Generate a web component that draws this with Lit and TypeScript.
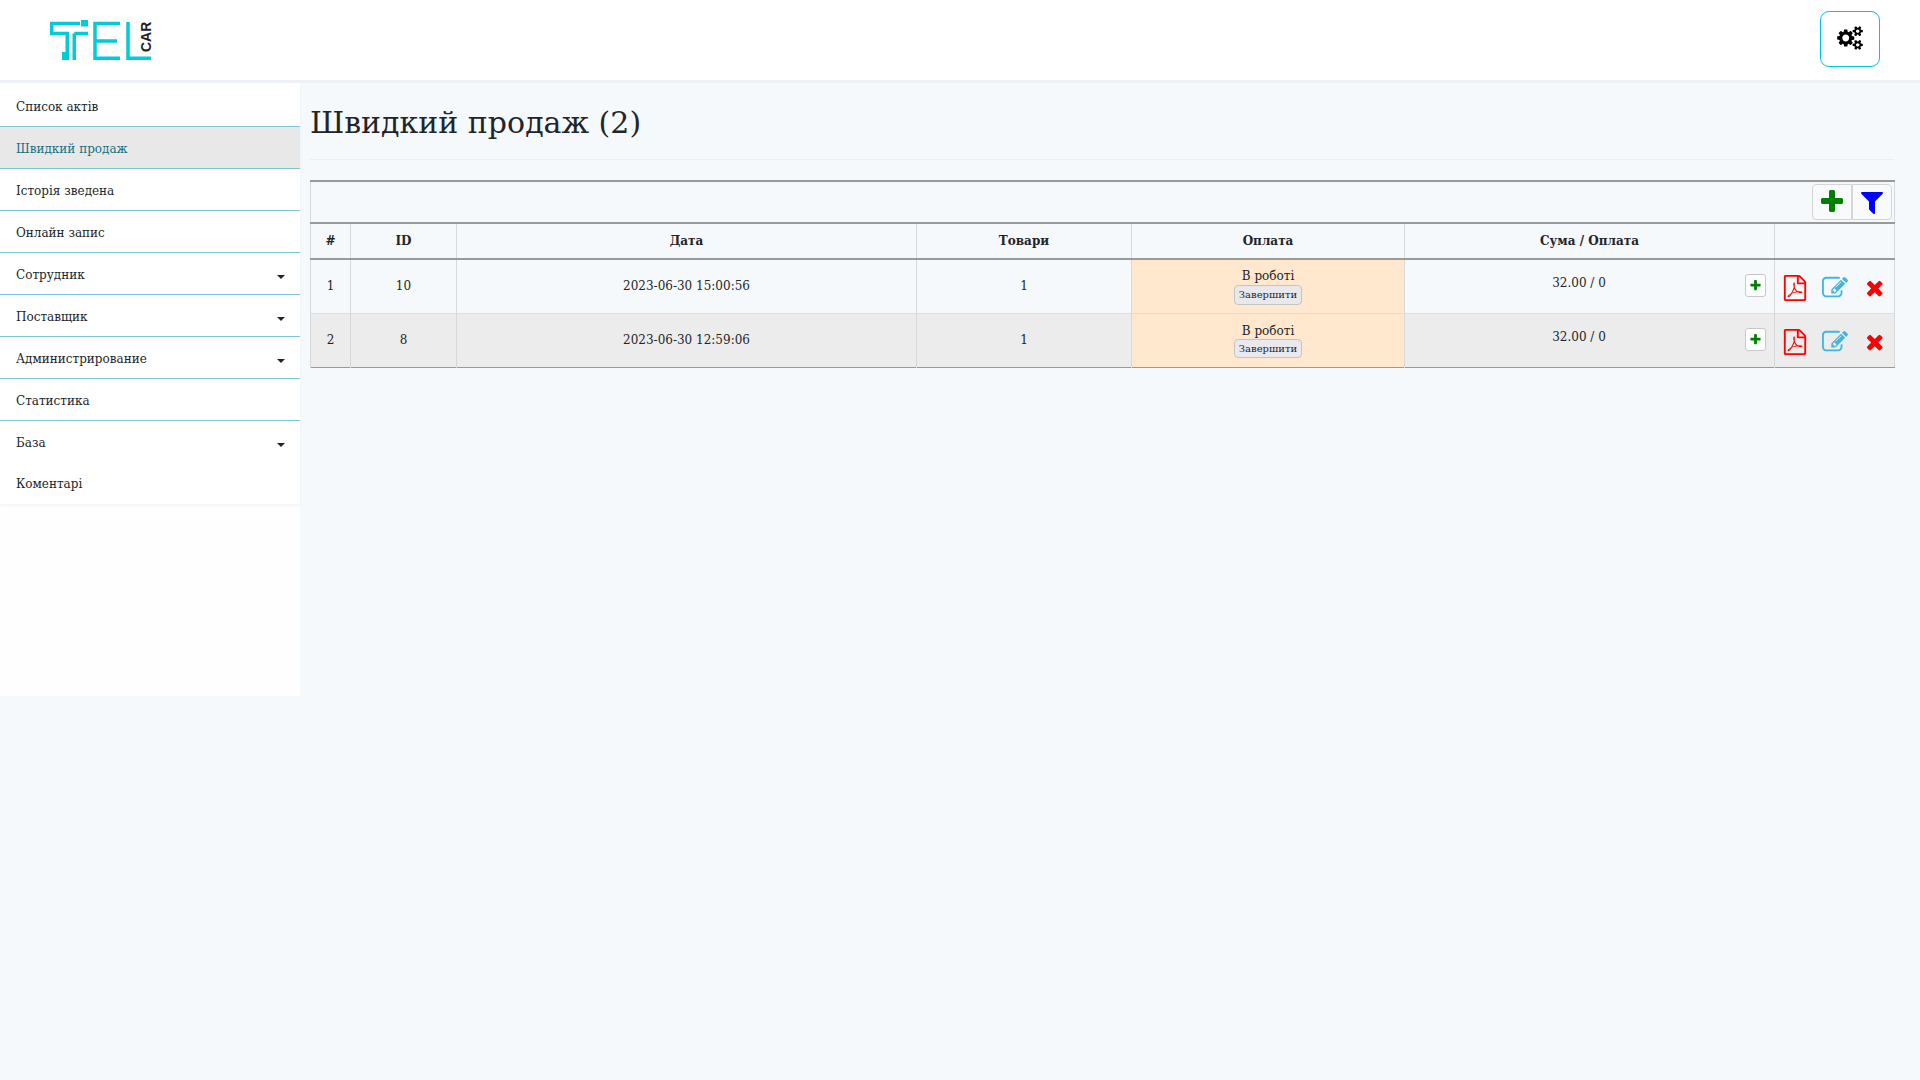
import { LitElement, html, css, svg } from "lit";
import { customElement } from "lit/decorators.js";

const P = {
  plus: "M1600 736v192q0 40-28 68t-68 28h-416v416q0 40-28 68t-68 28h-192q-40 0-68-28t-28-68v-416h-416q-40 0-68-28t-28-68v-192q0-40 28-68t68-28h416v-416q0-40 28-68t68-28h192q40 0 68 28t28 68v416h416q40 0 68 28t28 68z",
  times: "M1490 1322q0 40-28 68l-136 136q-28 28-68 28t-68-28l-294-294-294 294q-28 28-68 28t-68-28l-136-136q-28-28-28-68t28-68l294-294-294-294q-28-28-28-68t28-68l136-136q28-28 68-28t68 28l294 294 294-294q28-28 68-28t68 28l136 136q28 28 28 68t-28 68l-294 294 294 294q28 28 28 68z",
  filter: "M1595 295q17 41-14 70l-493 493v742q0 42-39 59-13 5-25 5-27 0-45-19l-256-256q-19-19-19-45v-486l-493-493q-31-29-14-70 17-39 59-39h1280q42 0 59 39z",
  edit: "M888 1184l116-116-152-152-116 116v56h96v96h56zm440-720q-16-16-33 1l-350 350q-17 17-1 33t33-1l350-350q17-17 1-33zm80 594v190q0 119-84.5 203.5t-203.5 84.5h-832q-119 0-203.5-84.5t-84.5-203.5v-832q0-119 84.5-203.5t203.5-84.5h832q63 0 117 25 15 7 18 23 3 17-9 29l-49 49q-14 14-32 8-23-6-45-6h-832q-66 0-113 47t-47 113v832q0 66 47 113t113 47h832q66 0 113-47t47-113v-126q0-13 9-22l64-64q15-15 35-7t20 29zm-96-738l288 288-672 672h-288v-288zm444 132l-92 92-288-288 92-92q28-28 68-28t68 28l152 152q28 28 28 68t-28 68z",
  pdf: "M1596 380q28 28 48 76t20 88v1152q0 40-28 68t-68 28h-1344q-40 0-68-28t-28-68v-1600q0-40 28-68t68-28h896q40 0 88 20t76 48zm-444-244v376h376q-10-29-22-41l-313-313q-12-12-41-22zm384 1528v-1024h-416q-40 0-68-28t-28-68v-416h-768v1536h1280zm-514-593q33 26 84 56 59-7 117-7 147 0 177 49 16 22 2 52 0 1-1 2l-2 2v1q-6 38-71 38-48 0-115-20t-130-53q-221 24-392 83-153 262-242 262-15 0-28-7l-24-12q-1-1-6-5-10-10-6-36 9-40 56-91.5t132-96.5q14-9 23 6 2 2 2 4 52-85 107-197 68-136 104-262-24-82-30.5-159.5t6.5-127.5q11-40 42-40h22q23 0 35 15 18 21 9 68-2 6-4 8 1 3 1 8v30q-2 123-14 192 55 164 146 238zm-576 411q52-24 137-158-51 40-87.5 84t-49.5 74zm398-920q-15 42-2 132 1-7 7-44 0-3 7-43 1-4 4-8-1-1-1-2-1-2-1-3-1-22-13-36 0 1-1 2v2zm-124 661q135-54 284-81-2-1-13-9.5t-16-13.5q-76-67-127-176-27 86-83 197-30 56-45 83zm646-16q-24-24-140-24 76 28 124 28 14 0 18-1 0-1-2-3z",
  cogs: "M896 896q0-106-75-181t-181-75-181 75-75 181 75 181 181 75 181-75 75-181zm768 512q0-52-38-90t-90-38-90 38-38 90q0 53 37.5 90.5t90.5 37.5 90.5-37.5 37.5-90.5zm0-1024q0-52-38-90t-90-38-90 38-38 90q0 53 37.5 90.5t90.5 37.5 90.5-37.5 37.5-90.5zm-384 421v185q0 10-7 19.5t-16 10.5l-155 24q-11 35-32 76 34 48 90 115 7 11 7 20 0 12-7 19-23 30-82.5 89.5t-78.5 59.5q-11 0-21-7l-115-90q-37 19-77 31-11 108-23 155-7 24-30 24h-186q-11 0-20-7.5t-10-17.5l-23-153q-34-10-75-31l-118 89q-7 7-20 7-11 0-21-8-144-133-144-160 0-9 7-19 10-14 41-53t47-61q-23-44-35-82l-152-24q-10-1-17-9.5t-7-19.5v-185q0-10 7-19.5t16-10.5l155-24q11-35 32-76-34-48-90-115-7-11-7-20 0-12 7-20 22-30 82-89t79-59q11 0 21 7l115 90q34-18 77-32 11-108 23-154 7-24 30-24h186q11 0 20 7.5t10 17.5l23 153q34 10 75 31l118-89q8-7 20-7 11 0 21 8 144 133 144 160 0 8-7 19-12 16-42 54t-45 60q23 48 34 82l152 23q10 2 17 10.5t7 19.5zm640 533v140q0 16-149 31-12 27-30 52 51 113 51 138 0 4-4 7-122 71-124 71-8 0-46-47t-52-68q-20 2-30 2t-30-2q-14 21-52 68t-46 47q-2 0-124-71-4-3-4-7 0-25 51-138-18-25-30-52-149-15-149-31v-140q0-16 149-31 13-29 30-52-51-113-51-138 0-4 4-7 4-2 35-20t59-34 30-16q8 0 46 46.5t52 67.5q20-2 30-2t30 2q51-71 92-112l6-2q4 0 124 70 4 3 4 7 0 25-51 138 17 23 30 52 149 15 149 31zm0-1024v140q0 16-149 31-12 27-30 52 51 113 51 138 0 4-4 7-122 71-124 71-8 0-46-47t-52-68q-20 2-30 2t-30-2q-14 21-52 68t-46 47q-2 0-124-71-4-3-4-7 0-25 51-138-18-25-30-52-149-15-149-31v-140q0-16 149-31 13-29 30-52-51-113-51-138 0-4 4-7 4-2 35-20t59-34 30-16q8 0 46 46.5t52 67.5q20-2 30-2t30 2q51-71 92-112l6-2q4 0 124 70 4 3 4 7 0 25-51 138 17 23 30 52 149 15 149 31z",
};

function icon(d: string, cls: string, vw = 1792) {
  return html`<svg class="ic ${cls}" viewBox="0 0 ${vw} 1792" fill="currentColor"><path d=${d}></path></svg>`;
}

const NAV: [string, boolean, boolean?][] = [
  ["Список актів", false],
  ["Швидкий продаж", false, true],
  ["Історія зведена", false],
  ["Онлайн запис", false],
  ["Сотрудник", true],
  ["Поставщик", true],
  ["Администрирование", true],
  ["Статистика", false],
  ["База", true],
  ["Коментарі", false],
];

const ROWS = [
  { n: 1, id: 10, date: "2023-06-30 15:00:56" },
  { n: 2, id: 8, date: "2023-06-30 12:59:06" },
];

@customElement("app-root")
export class AppRoot extends LitElement {
  static styles = css`
    :host {
      display: block;
      min-height: 1080px;
      background: #f6f9fc;
      font-family: "DejaVu Serif", serif;
      font-size: 12px;
      color: #212529;
    }
    * { box-sizing: border-box; }
    .ic { display: block; }
    .top {
      height: 83px;
      background: #fff;
      border-bottom: 3px solid #edf0f4;
      display: flex;
      align-items: flex-start;
      justify-content: space-between;
      padding: 11px 40px 0 50px;
    }
    .logo { display: flex; align-items: flex-start; padding-top: 9px; }
    .logo svg { display: block; }
    .car {
      writing-mode: vertical-rl;
      transform: rotate(180deg);
      font: bold 14px/14px "Liberation Sans", sans-serif;
      color: #222;
      height: 32px;
      width: 14px;
      text-align: left;
      margin-left: -12px;
    }
    .gear {
      width: 60px;
      height: 56px;
      border: 1px solid #00c8d4;
      border-radius: 9px;
      background: #fff;
      display: flex;
      align-items: center;
      justify-content: center;
      color: #000;
      padding: 0 0 2px;
    }
    .gear .ic { width: 26px; height: 24px; }
    .body { display: flex; align-items: flex-start; }
    .side {
      width: 300px;
      height: 613px;
      flex: none;
      background: #fefefe;
    }
    .nav { background: #fff; box-shadow: 0 2px 3px rgba(0, 0, 0, 0.04); }
    .item {
      height: 42px;
      display: flex;
      align-items: center;
      justify-content: space-between;
      padding: 2px 16px 0;
      border-bottom: 1px solid #7dc7d6;
    }
    .item.first { height: 44px; padding-top: 5px; }
    .item.on { background: #e8e8e8; color: #17717f; }
    .item.nob { border-bottom: 0; height: 41px; }
    .item.last { border-bottom: 0; height: 42px; }
    .caret {
      width: 0;
      height: 0;
      border-left: 4px solid transparent;
      border-right: 4px solid transparent;
      border-top: 4px solid #212529;
      margin-top: 4px;
      margin-right: -1px;
    }
    main { flex: 1; padding: 0 26px 0 10px; min-width: 0; }
    h1 {
      margin: 0;
      height: 77px;
      padding-top: 22px;
      font-size: 30px;
      line-height: 36px;
      font-weight: 400;
      border-bottom: 1px solid #eceff2;
    }
    table {
      margin-top: 20px;
      width: 100%;
      table-layout: fixed;
      border-collapse: collapse;
      border-left: 1px solid #d6d8da;
      border-right: 1px solid #d6d8da;
      border-bottom: 1px solid #9a9a9a;
    }
    .tool td {
      height: 42px;
      border-top: 2px solid #9a9a9a;
      padding: 0 2px 0 0;
    }
    .btns {
      display: flex;
      justify-content: flex-end;
    }
    .btns button {
      width: 40px;
      height: 36px;
      background: #f8fafc;
      border: 1px solid #d3d5d7;
      display: flex;
      align-items: center;
      justify-content: center;
      padding: 0;
    }
    .btns button:first-child { border-radius: 4px 0 0 4px; }
    .btns button:last-child { border-radius: 0 4px 4px 0; }
    .btns .ic { width: 28px; height: 28px; }
    .green { color: #008000; }
    .blue { color: #0000ff; }
    th {
      height: 36px;
      border-top: 2px solid #9a9a9a;
      border-bottom: 2px solid #9a9a9a;
      border-left: 1px solid #d6d8da;
      font-weight: 700;
      padding: 0;
      text-align: center;
    }
    td.c {
      border-left: 1px solid #d6d8da;
      border-top: 1px solid #dedede;
      text-align: center;
      padding: 0;
      height: 54px;
    }
    tr.row2 td.c { background: #ececec; }
    tr.r2 td.c { height: 54px; }
    td.pay, tr.row2 td.pay { background: #ffe8cd; line-height: 16px; }
    .done {
      display: block;
      margin: 1px auto 0;
      width: 68px;
      height: 20px;
      border: 1px solid #c4c4c4;
      border-radius: 4px;
      background: #e9e9ed;
      font: 10px/17px "DejaVu Serif", serif;
      color: #212529;
      padding: 0;
    }
    tr.r2 .done { height: 19px; margin-top: 0; }
    .sumcell { display: flex; align-items: center; height: 52px; }
    .sumtext { flex: 1; text-align: center; padding-left: 8px; margin-top: -7px; }
    tr.r2 .sumtext { margin-top: -6px; }
    .mini {
      width: 21px;
      height: 23px;
      margin: -1px 8px 0 0;
      border: 1px solid #c8c8c8;
      border-radius: 3px;
      background: #fff;
      display: flex;
      align-items: center;
      justify-content: center;
      padding: 0;
      flex: none;
    }
    .mini .ic { width: 13px; height: 13px; }
    .acts { display: flex; align-items: center; justify-content: center; height: 52px; padding-top: 3px; }
    .acts span { width: 40px; display: flex; justify-content: center; }
    .pdf { width: 26px; height: 26px; color: #ff0000; }
    .edit { width: 26px; height: 26px; color: #3fb6df; }
    .x { width: 23.5px; height: 23.5px; color: #ff0000; }
  `;

  logo() {
    return svg`<svg width="101" height="40" viewBox="0 0 101 40" fill="none" stroke="#00ccd8" stroke-width="3.5">
      <path d="M0 3.5H30M1.75 3.5V15M0 13.5H19M17.25 13.5V34M24.25 13.5V40M24.25 13.5H38"></path>
      <rect x="31" y="0" width="7" height="6.5" fill="#00ccd8" stroke="none"></rect>
      <rect x="12" y="32" width="7" height="8" fill="#00ccd8" stroke="none"></rect>
      <path d="M70 3.5H45V38.25H70M45 21H67"></path>
      <path d="M78 2V38.25H101"></path>
    </svg>`;
  }

  render() {
    return html`
      <div class="top">
        <div class="logo">${this.logo()}<div class="car">CAR</div></div>
        <button class="gear">${icon(P.cogs, "", 1920)}</button>
      </div>
      <div class="body">
        <aside class="side">
          <nav class="nav">
            ${NAV.map(
              ([t, caret, on], i) => html`<div class="item ${on ? "on" : ""} ${i === 0 ? "first" : ""} ${i === 9 ? "last" : ""} ${i === 8 ? "nob" : ""}">
                <span>${t}</span>${caret ? html`<i class="caret"></i>` : ""}
              </div>`
            )}
          </nav>
        </aside>
        <main>
          <h1>Швидкий продаж (2)</h1>
          <table>
            <colgroup>
              <col style="width:40px" /><col style="width:106px" /><col style="width:460px" /><col style="width:215px" /><col style="width:273px" /><col style="width:370px" /><col style="width:120px" />
            </colgroup>
            <tr class="tool">
              <td colspan="7">
                <div class="btns">
                  <button>${icon(P.plus, "green")}</button>
                  <button>${icon(P.filter, "blue")}</button>
                </div>
              </td>
            </tr>
            <tr>
              <th>#</th><th>ID</th><th>Дата</th><th>Товари</th><th>Оплата</th><th>Сума / Оплата</th><th></th>
            </tr>
            ${ROWS.map(
              (r, i) => html`<tr class="${i ? "row2 r2" : ""}">
                <td class="c">${r.n}</td>
                <td class="c">${r.id}</td>
                <td class="c">${r.date}</td>
                <td class="c">1</td>
                <td class="c pay">В роботі<button class="done">Завершити</button></td>
                <td class="c">
                  <div class="sumcell">
                    <div class="sumtext">32.00 / 0</div>
                    <button class="mini">${icon(P.plus, "green")}</button>
                  </div>
                </td>
                <td class="c">
                  <div class="acts">
                    <span>${icon(P.pdf, "pdf")}</span>
                    <span>${icon(P.edit, "edit")}</span>
                    <span>${icon(P.times, "x")}</span>
                  </div>
                </td>
              </tr>`
            )}
          </table>
        </main>
      </div>
    `;
  }
}
